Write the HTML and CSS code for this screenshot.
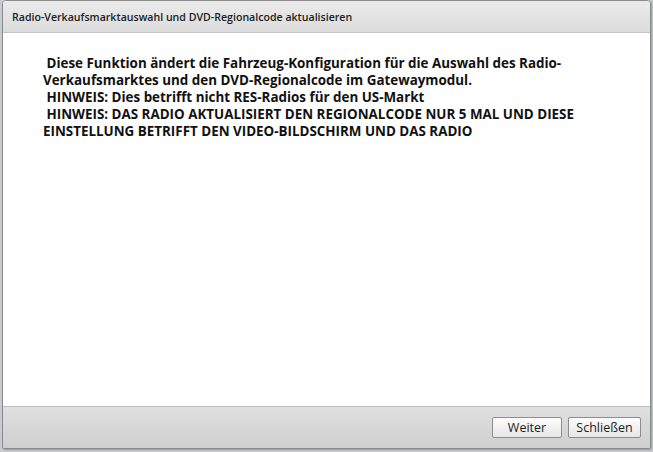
FILE: index.html
```html
<!DOCTYPE html>
<html lang="de">
<head>
     <meta charset="UTF-8">
     <title>Radio-Verkaufsmarktauswahl und DVD-Regionalcode aktualisieren</title>
     <link rel="stylesheet" href="styles.css">
</head>
<body>
     <div class="dialog">
          <header class="dialog-title">Radio-Verkaufsmarktauswahl und DVD-Regionalcode aktualisieren</header>
          <main class="dialog-body">
               <p class="message">&nbsp;Diese Funktion ändert die Fahrzeug-Konfiguration für die Auswahl des Radio-Verkaufsmarktes und den DVD-Regionalcode im Gatewaymodul.<br>
               &nbsp;HINWEIS: Dies betrifft nicht RES-Radios für den US-Markt<br>
               &nbsp;HINWEIS: DAS RADIO AKTUALISIERT DEN REGIONALCODE NUR 5 MAL UND DIESE EINSTELLUNG BETRIFFT DEN VIDEO-BILDSCHIRM UND DAS RADIO</p>
          </main>
          <footer class="dialog-buttons">
               <button class="btn btn-next">Weiter</button>
               <button class="btn btn-close">Schließen</button>
          </footer>
     </div>
</body>
</html>
```

FILE: styles.css
```css
:root {
     --FONT-FAMILY: "Open Sans", "DejaVu Sans", sans-serif;
     --BORDER-color: #8a8a8a;
     --TEXT-color: #111;
}

* {
     margin: 0;
     padding: 0;
     box-sizing: border-box;
}

html,
body {
     height: 100%;
     background: #c9ccd0;
}

body {
     font-family: var(--FONT-FAMILY);
     color: var(--TEXT-color);
     padding: 0 2px 3px 2px;
}

/** fenêtre **/
.dialog {
     display: flex;
     flex-direction: column;
     height: 449px;
     border: 1px solid var(--BORDER-color);
     border-radius: 4px 4px 2px 2px;
     background: #fff;
     overflow: hidden;
     box-shadow: 1px 1px 2px rgba(0, 0, 0, .25);
}

.dialog-title {
     height: 32px;
     padding: 0 9px;
     display: flex;
     align-items: center;
     font-size: 10.6px;
     font-weight: 600;
     color: #1c1c1c;
     background: linear-gradient(#ebebeb, #dcdcdc);
     border-bottom: 1px solid #c4c4c4;
}

.dialog-body {
     flex: 1;
     padding: 22px 30px 0 40px;
}

.message {
     font-size: 13.4px;
     font-weight: 700;
     line-height: 17px;
}

.dialog-buttons {
     height: 42px;
     display: flex;
     justify-content: flex-end;
     align-items: center;
     gap: 6px;
     padding: 0 9px 0 0;
     background: linear-gradient(#e0e0e0, #cfcfcf);
     border-top: 1px solid #bdbdbd;
}

.btn {
     font-family: var(--FONT-FAMILY);
     font-size: 12.5px;
     color: #1c1c1c;
     height: 21px;
     border: 1px solid #8c8c8c;
     border-radius: 2px;
     background: linear-gradient(#fdfdfd, #e6e6e6);
}

.btn-next {
     width: 70px;
}

.btn-close {
     width: 73px;
}
```
